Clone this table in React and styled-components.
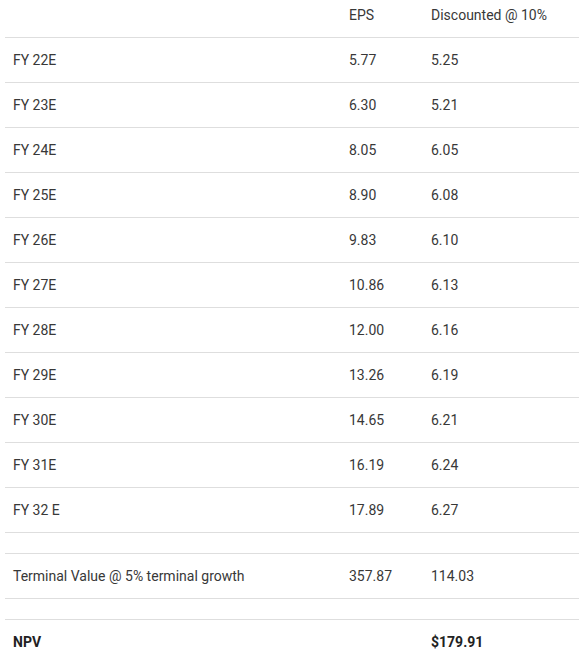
import styled, { createGlobalStyle } from 'styled-components';

const rows = [
    ['FY 22E', '5.77', '5.25'],
    ['FY 23E', '6.30', '5.21'],
    ['FY 24E', '8.05', '6.05'],
    ['FY 25E', '8.90', '6.08'],
    ['FY 26E', '9.83', '6.10'],
    ['FY 27E', '10.86', '6.13'],
    ['FY 28E', '12.00', '6.16'],
    ['FY 29E', '13.26', '6.19'],
    ['FY 30E', '14.65', '6.21'],
    ['FY 31E', '16.19', '6.24'],
    ['FY 32 E', '17.89', '6.27'],
];

export default function App() {
    return (
        <>
            <GlobalStyle />
            <Table>
                <Row $head>
                    <Cell />
                    <Cell>EPS</Cell>
                    <Cell>Discounted @ 10%</Cell>
                </Row>
                {rows.map(([label, eps, disc]) => (
                    <Row key={label}>
                        <Cell>{label}</Cell>
                        <Cell>{eps}</Cell>
                        <Cell>{disc}</Cell>
                    </Row>
                ))}
                <Row $spacer />
                <Row>
                    <Cell>Terminal Value @ 5% terminal growth</Cell>
                    <Cell>357.87</Cell>
                    <Cell>114.03</Cell>
                </Row>
                <Row $spacer />
                <Row $bold>
                    <Cell>NPV</Cell>
                    <Cell />
                    <Cell>$179.91</Cell>
                </Row>
            </Table>
        </>
    );
}

const GlobalStyle = createGlobalStyle`
    body {
        margin: 0;
        background: #fff;
        font-family: Roboto, "Liberation Sans", sans-serif;
    }
`;

const Table = styled.div`
    display: flex;
    flex-direction: column;
    margin-left: 5px;
    width: 574px;
    font-size: 14px;
    color: #383838;
`;

const Row = styled.div`
    display: grid;
    grid-template-columns: 336px 82px 1fr;
    align-items: center;
    height: ${p => (p.$head ? '29px' : p.$spacer ? '20px' : '44px')};
    padding-bottom: ${p => (p.$head ? '8px' : '0')};
    box-sizing: content-box;
    border-bottom: 1px solid #dedede;
    font-weight: ${p => (p.$bold ? 700 : 400)};
    color: ${p => (p.$bold ? '#222' : '#383838')};

    &:last-child {
        border-bottom: none;
    }
`;

const Cell = styled.div`
    padding: 0 8px;
    white-space: nowrap;
`;
